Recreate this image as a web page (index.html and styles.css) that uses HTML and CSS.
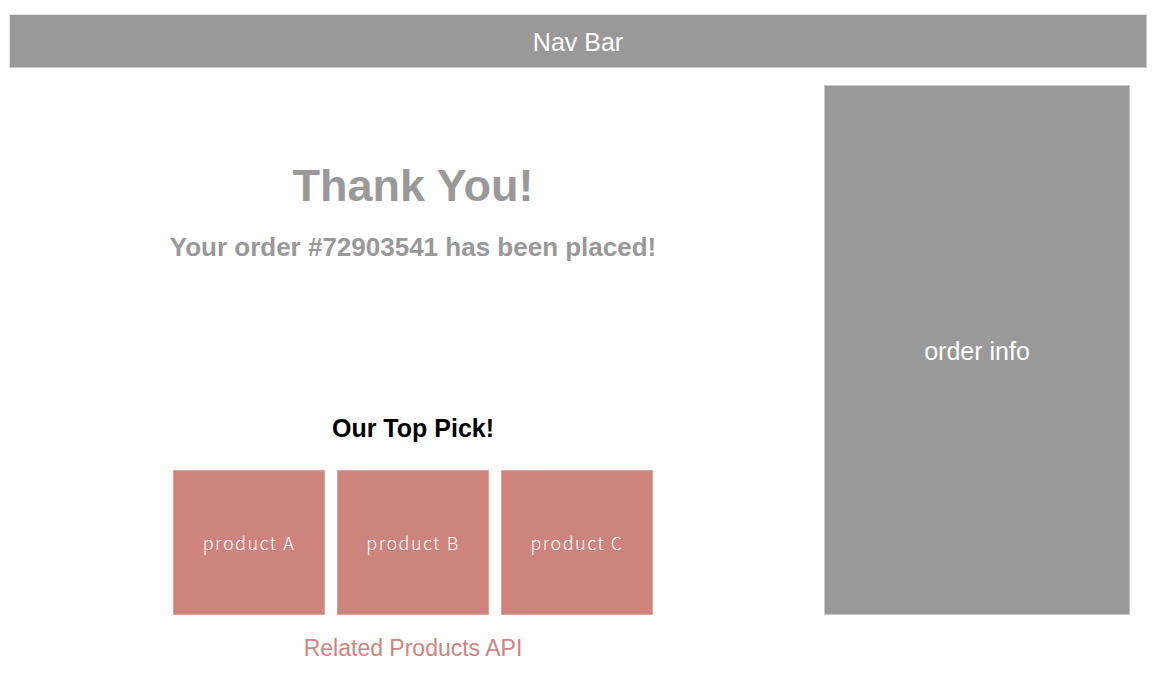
FILE: index.html
```html
<!DOCTYPE html>
<html lang="en">
<head>
<meta charset="utf-8">
<title>Thank You</title>
<link rel="stylesheet" href="styles.css">
</head>
<body>
  <header class="navbar">Nav Bar</header>
  <div class="layout">
    <main class="main">
      <h1 class="thanks">Thank You!</h1>
      <p class="order-msg">Your order #72903541 has been placed!</p>
      <h2 class="pick-title">Our Top Pick!</h2>
      <div class="products">
        <div class="product">product A</div>
        <div class="product">product B</div>
        <div class="product">product C</div>
      </div>
      <p class="related">Related Products API</p>
    </main>
    <aside class="order-info">order info</aside>
  </div>
</body>
</html>
```

FILE: styles.css
```css
html, body {
  margin: 0;
  padding: 0;
  background: #ffffff;
}

body {
  font-family: "Liberation Sans", Arial, Helvetica, sans-serif;
  padding: 14px 13px 0 9px;
}

.navbar {
  height: 54px;
  box-sizing: border-box;
  background: #999999;
  border: 1px solid #c8c8c8;
  border-top-color: #e4e4e4;
  border-left-color: #e4e4e4;
  color: #ffffff;
  font-size: 25px;
  display: flex;
  align-items: center;
  justify-content: center;
  padding-top: 2px;
}

.layout {
  display: grid;
  grid-template-columns: 808px 306px;
  column-gap: 7px;
  margin-top: 17px;
}

.main {
  display: flex;
  flex-direction: column;
  align-items: center;
  padding-top: 76px;
}

.thanks {
  margin: 0;
  font-size: 45px;
  line-height: 50px;
  font-weight: 700;
  color: #999999;
}

.order-msg {
  margin: 21px 0 0;
  font-size: 26px;
  line-height: 30px;
  font-weight: 700;
  color: #999999;
}

.pick-title {
  margin: 151px 0 0;
  font-size: 25px;
  line-height: 30px;
  font-weight: 700;
  color: #000000;
}

.products {
  display: flex;
  gap: 12px;
  margin-top: 27px;
}

.product {
  width: 152px;
  height: 145px;
  box-sizing: border-box;
  background: #cf837d;
  border: 1px solid #dba39e;
  color: #ffffff;
  font-family: "Noto Sans CJK JP", "Noto Sans", sans-serif;
  font-size: 18px;
  font-weight: 300;
  letter-spacing: 1.5px;
  display: flex;
  align-items: center;
  justify-content: center;
  padding-bottom: 2px;
}

.related {
  margin: 20px 0 0;
  font-size: 23px;
  line-height: 26px;
  color: #d0847e;
}

.order-info {
  height: 530px;
  box-sizing: border-box;
  background: #999999;
  border: 1px solid #c8c8c8;
  color: #ffffff;
  font-size: 25px;
  display: flex;
  align-items: center;
  justify-content: center;
  padding-top: 2px;
}
```
